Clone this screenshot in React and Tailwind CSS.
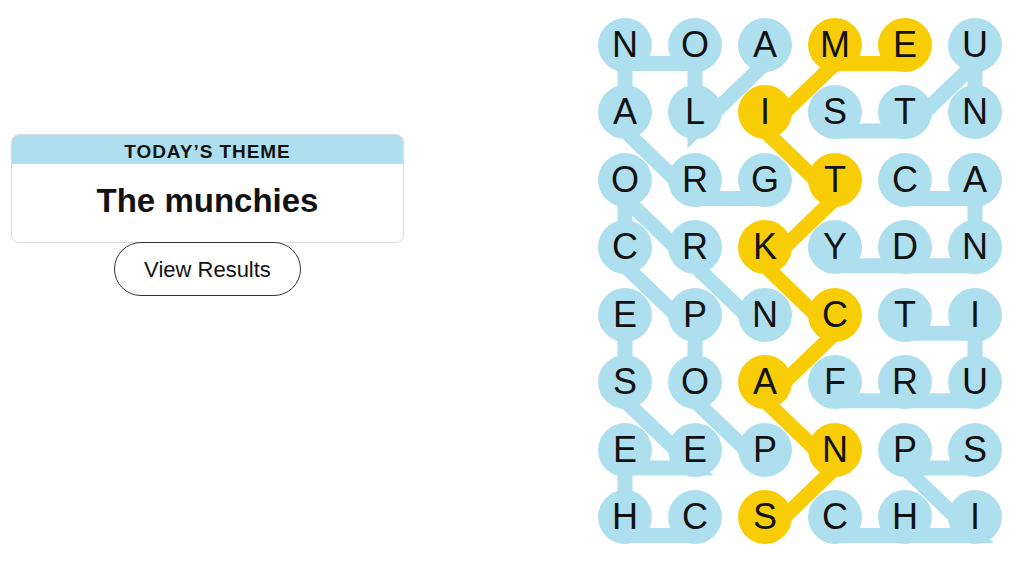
import React from 'react';

const BOARD = [
    'NOAMEU',
    'ALISTN',
    'ORGTCA',
    'CRKYDN',
    'EPNCTI',
    'SOAFRU',
    'EEPNPS',
    'HCSCHI',
];

// paths as [row, col] lists
const WORDS = [
    { name: 'granola', cells: [[2, 2], [2, 1], [1, 0], [0, 0], [0, 1], [1, 1], [0, 2]] },
    { name: 'nuts', cells: [[1, 5], [0, 5], [1, 4], [1, 3]] },
    { name: 'candy', cells: [[2, 4], [2, 5], [3, 5], [3, 4], [3, 3]] },
    { name: 'popcorn', cells: [[6, 2], [5, 1], [4, 1], [3, 0], [2, 0], [3, 1], [4, 2]] },
    { name: 'cheese', cells: [[7, 1], [7, 0], [6, 0], [6, 1], [5, 0], [4, 0]] },
    { name: 'fruit', cells: [[5, 3], [5, 4], [5, 5], [4, 5], [4, 4]] },
    { name: 'chips', cells: [[7, 3], [7, 4], [7, 5], [6, 4], [6, 5]] },
];

const SPANGRAM = [[7, 2], [6, 3], [5, 2], [4, 3], [3, 2], [2, 3], [1, 2], [0, 3], [0, 4]];

const BLUE = '#aedfee';
const YELLOW = '#f8cd05';

const toPoints = (cells) =>
    cells.map(([r, c]) => `${27 + c * 70},${(27 + r * 67.43 + 18.5).toFixed(1)}`).join(' ');

const isSpangram = (r, c) => SPANGRAM.some(([sr, sc]) => sr === r && sc === c);

function ThemeCard() {
    return (
        <div className="flex flex-col items-center w-[393px] ml-[11px] mt-[134px]">
            <div className="w-full rounded-lg border border-[#dcdcdc] overflow-hidden bg-white">
                <div className="h-[29px] bg-[#aedfee] flex items-center justify-center pt-[3px]">
                    <span className="text-[19px] font-bold uppercase tracking-[0.05em] text-[#121212] leading-none font-['Liberation_Sans',sans-serif]">
                        Today’s Theme
                    </span>
                </div>
                <div className="h-[78px] flex items-center justify-center pb-[5px]">
                    <h1 className="text-[33px] font-bold text-[#121212] font-['Liberation_Sans',sans-serif]">
                        The munchies
                    </h1>
                </div>
            </div>
            <button className="-mt-[1px] w-[187px] h-[54px] rounded-full border border-[#333] bg-white text-[22px] text-[#121212] font-['Liberation_Sans',sans-serif]">
                View Results
            </button>
        </div>
    );
}

function Board() {
    return (
        <div className="relative mt-[18px] mr-[11px] w-[404px] h-[526px]">
            <svg className="absolute inset-0 overflow-visible" width="404" height="526" viewBox="0 0 404 526">
                {WORDS.map(w => (
                    <polyline
                        key={w.name}
                        points={toPoints(w.cells)}
                        fill="none"
                        stroke={BLUE}
                        strokeWidth="15"
                        strokeLinejoin="miter"
                        strokeLinecap="butt"
                    />
                ))}
                <polyline
                    points={toPoints(SPANGRAM)}
                    fill="none"
                    stroke={YELLOW}
                    strokeWidth="15"
                    strokeLinejoin="miter"
                    strokeLinecap="butt"
                />
            </svg>
            <div className="relative grid grid-cols-[repeat(6,54px)] grid-rows-[repeat(8,54px)] gap-x-[16px] gap-y-[13.43px]">
                {BOARD.map((row, r) =>
                    row.split('').map((ch, c) => (
                        <div
                            key={`${r}-${c}`}
                            className={
                                isSpangram(r, c)
                                    ? 'w-[54px] h-[54px] rounded-full bg-[#f8cd05] flex items-center justify-center'
                                    : 'w-[54px] h-[54px] rounded-full bg-[#aedfee] flex items-center justify-center'
                            }
                        >
                            <span className="text-[36px] leading-none text-[#121212] font-['Liberation_Sans',sans-serif]">
                                {ch}
                            </span>
                        </div>
                    ))
                )}
            </div>
        </div>
    );
}

export default function App() {
    return (
        <div className="w-[1013px] h-[570px] bg-white flex justify-between items-start">
            <ThemeCard />
            <Board />
        </div>
    );
}
